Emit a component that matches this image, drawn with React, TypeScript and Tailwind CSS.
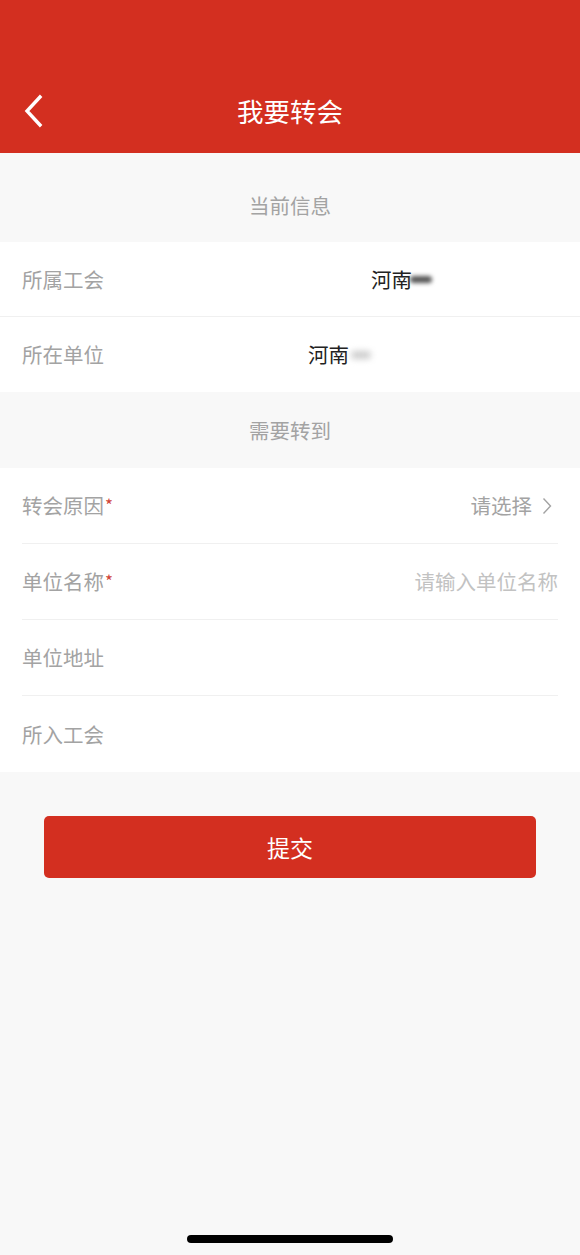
import React from "react";

const font = { fontFamily: '"Noto Sans CJK SC", "Noto Sans", sans-serif' };

function Row({
  label,
  required,
  right,
  inset,
  last,
  h,
}: {
  label: string;
  required?: boolean;
  right?: React.ReactNode;
  inset?: boolean;
  last?: boolean;
  h: string;
}) {
  return (
    <div className={`bg-white ${inset ? "px-[22px]" : ""}`}>
      <div
        className={`${h} flex items-center ${inset ? "" : "pl-[22px] pr-[22px]"} ${
          last ? "" : "border-b border-[#f0f0f0]"
        }`}
      >
        <span className="text-[20.5px] text-[#a3a3a3] leading-none">{label}</span>
        {required && (
          <span className="text-[17px] text-[#d04438] leading-none self-start mt-[28px] ml-[1px]">*</span>
        )}
        {right}
      </div>
    </div>
  );
}

export default function App() {
  return (
    <div className="w-[580px] h-[1255px] bg-[#f8f8f8] flex flex-col relative overflow-hidden" style={font}>
      {/* Header */}
      <div className="h-[153px] bg-[#d32f20] flex items-end">
        <div className="h-[82px] w-full flex items-center relative">
          <svg className="absolute left-[22px] top-[23px]" width="22" height="34" viewBox="0 0 22 34">
            <path d="M18 3 L5 17 L18 31" fill="none" stroke="white" strokeWidth="3.4" strokeLinecap="square" />
          </svg>
          <div className="flex-1 text-center text-white text-[26.5px] leading-none mt-[-2px]">我要转会</div>
        </div>
      </div>

      <div className="h-[89px] flex items-center justify-center bg-[#f8f8f8] pt-[16px]">
        <span className="text-[20.5px] text-[#a3a3a3] leading-none">当前信息</span>
      </div>

      <Row
        label="所属工会"
        h="h-[75px]"
        right={
          <span className="ml-[267px] flex items-center">
            <span className="text-[20.5px] text-[#222] leading-none">河南</span>
            <span className="w-[22px] h-[7px] rounded-full bg-[#555] blur-[2px] -ml-[2px]" />
          </span>
        }
      />
      <Row
        label="所在单位"
        h="h-[75px]"
        last
        right={
          <span className="ml-[204px] flex items-center">
            <span className="text-[20.5px] text-[#222] leading-none">河南</span>
            <span className="w-[20px] h-[8px] rounded-full bg-[#ccc] blur-[3px] ml-[2px]" />
          </span>
        }
      />

      <div className="h-[76px] flex items-center justify-center bg-[#f8f8f8]">
        <span className="text-[20.5px] text-[#a3a3a3] leading-none">需要转到</span>
      </div>

      <Row
        label="转会原因"
        h="h-[76px]"
        required
        inset
        right={
          <span className="ml-auto mr-[6px] flex items-center text-[20.5px] text-[#a3a3a3] leading-none">
            请选择
            <svg className="ml-[10px]" width="10" height="18" viewBox="0 0 10 18">
              <path d="M1.5 1.5 L8.5 9 L1.5 16.5" fill="none" stroke="#a3a3a3" strokeWidth="1.4" />
            </svg>
          </span>
        }
      />
      <Row
        label="单位名称"
        h="h-[76px]"
        required
        inset
        right={<span className="ml-auto text-[20.5px] text-[#c2c2c2] leading-none">请输入单位名称</span>}
      />
      <Row label="单位地址" h="h-[76px]" inset />
      <Row label="所入工会" h="h-[76px]" inset last />

      <div className="px-[44px] pt-[44px]">
        <button className="w-full h-[62px] rounded-[5px] bg-[#d32f20] text-white text-[23px] leading-none flex items-center justify-center">
          提交
        </button>
      </div>

      <div className="absolute left-[187px] top-[1235px] w-[206px] h-[8px] rounded-full bg-black" />
    </div>
  );
}
